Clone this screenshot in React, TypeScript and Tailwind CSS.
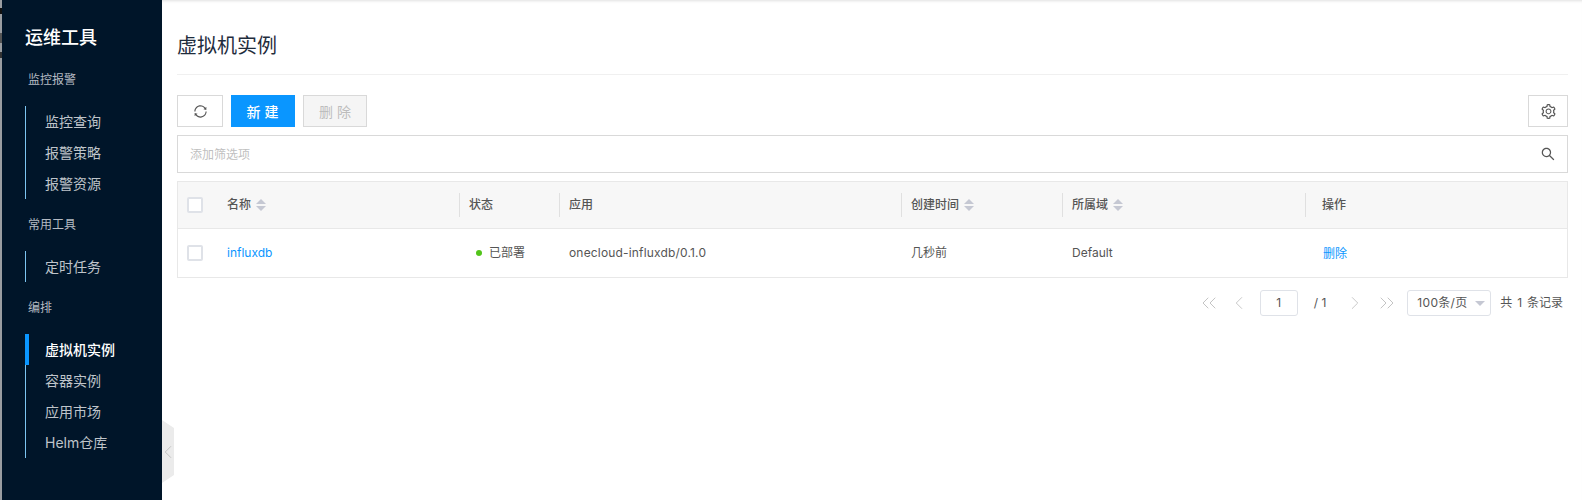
import React from 'react';
import { ChevronLeft, ChevronRight, ChevronsLeft, ChevronsRight } from 'lucide-react';
import { AiOutlineSearch, AiOutlineSetting, AiOutlineSync } from 'react-icons/ai';

const Group = ({ label, items, active }: { label: string; items: string[]; active?: string }) => (
  <div>
    <div className="h-[12px] flex items-center pl-[26px] text-[12px] leading-none text-[#b4bac2]">{label}</div>
    <ul className="mt-[20px] ml-[23px] border-l border-[#7cc4f0]">
      {items.map((item) => (
        <li
          key={item}
          className={
            item === active
              ? 'relative h-[31px] flex items-center pl-[19px] text-[14px] font-medium text-white'
              : 'h-[31px] flex items-center pl-[19px] text-[14px] text-[#bfc4ca]'
          }
        >
          {item === active && <span className="absolute left-[-1px] top-0 w-[4px] h-[31px] bg-[#0a96ff]" />}
          {item}
        </li>
      ))}
    </ul>
  </div>
);

const Sorter = () => (
  <span className="ml-[5px] flex flex-col gap-[2px]">
    <span className="w-0 h-0 border-x-[5px] border-x-transparent border-b-[5px] border-b-[#c5c8d3]" />
    <span className="w-0 h-0 border-x-[5px] border-x-transparent border-t-[5px] border-t-[#c5c8d3]" />
  </span>
);

const Checkbox = () => <span className="block w-[16px] h-[16px] border-2 border-[#dfe2e8] rounded-[2px] bg-white" />;

const gridCols = 'grid grid-cols-[49px_232px_100px_342px_161px_243px_1fr]';

const HeadCell = ({ label, sort, last }: { label: string; sort?: boolean; last?: boolean }) => (
  <div className={last ? 'flex items-center h-[24px] pl-[16px] border-l border-[#e0e0e0]' : 'flex items-center h-[24px] pl-[9px] border-l border-[#e0e0e0]'}>
    {label}
    {sort && <Sorter />}
  </div>
);

export default function App() {
  return (
    <div className="relative flex h-[500px] bg-white overflow-hidden font-['Inter','Noto_Sans_CJK_SC',sans-serif]">
      <div className="w-[2px] bg-[#9a9da1] flex flex-col">
        <div className="mt-[8px] h-[6px] bg-[#111]" />
        <div className="mt-[19px] h-[10px] bg-[#555]" />
        <div className="mt-[9px] h-[6px] bg-[#333]" />
      </div>
      <aside className="w-[160px] bg-[#001529] pt-[26px]">
        <div className="pl-[23px] h-[24px] flex items-center text-[18px] font-medium leading-none text-white">运维工具</div>
        <div className="mt-[24px] flex flex-col gap-[20px]">
          <Group label="监控报警" items={['监控查询', '报警策略', '报警资源']} />
          <Group label="常用工具" items={['定时任务']} />
          <Group label="编排" items={['虚拟机实例', '容器实例', '应用市场', 'Helm仓库']} active="虚拟机实例" />
        </div>
      </aside>
      <div className="absolute left-[162px] top-[420px] w-[12px] h-[63px] bg-[#ebebeb] flex items-center justify-center [clip-path:polygon(0_0,100%_8px,100%_55px,0_100%)]">
        <ChevronLeft size={22} strokeWidth={1} className="shrink-0 text-[#bdbdbd]" />
      </div>

      <main className="flex-1 pl-[15px] pr-[14px] text-[#555] shadow-[inset_0_3px_3px_-2px_rgba(0,0,0,0.12)]">
        <div className="h-[75px] pt-[33px] border-b border-[#f0f0f0]">
          <h1 className="text-[20px] leading-[26px] text-[#1f2d3d]">虚拟机实例</h1>
        </div>

        <div className="mt-[20px] flex items-center h-[32px]">
          <button className="w-[46px] h-[32px] border border-[#d9d9d9] flex items-center justify-center">
            <AiOutlineSync size={15} className="text-[#555]" />
          </button>
          <button className="ml-[8px] w-[64px] h-[32px] pl-[3px] bg-[#0a96ff] text-white text-[14px] font-medium tracking-[4px]">新建</button>
          <button className="ml-[8px] w-[64px] h-[32px] pl-[4px] border border-[#d9d9d9] bg-[#f5f5f5] text-[#bdbdbd] text-[14px] tracking-[4px]">删除</button>
          <button className="ml-auto w-[40px] h-[32px] border border-[#d9d9d9] flex items-center justify-center">
            <AiOutlineSetting size={17} className="text-[#555]" />
          </button>
        </div>

        <div className="mt-[8px] h-[38px] border border-[#d9d9d9] flex items-center justify-between pl-[12px] pr-[11px]">
          <span className="pt-[1px] text-[12px] text-[#bfbfbf]">添加筛选项</span>
          <AiOutlineSearch size={16} className="text-[#555]" />
        </div>

        <div className="mt-[8px] border border-[#e8e8e8] text-[12px]">
          <div className={`${gridCols} h-[47px] items-center bg-[#f7f7f7] border-b border-[#e8e8e8] font-medium`}>
            <div className="pl-[9px]"><Checkbox /></div>
            <div className="flex items-center">名称<Sorter /></div>
            <HeadCell label="状态" />
            <HeadCell label="应用" />
            <HeadCell label="创建时间" sort />
            <HeadCell label="所属域" sort />
            <HeadCell label="操作" last />
          </div>
          <div className={`${gridCols} h-[48px] items-center`}>
            <div className="pl-[9px]"><Checkbox /></div>
            <div className="text-[#0a96ff]">influxdb</div>
            <div className="pl-[17px] flex items-center">
              <span className="w-[6px] h-[6px] rounded-full bg-[#52c41a] mr-[7px]" />已部署
            </div>
            <div className="pl-[10px] tracking-[0.17px]">onecloud-influxdb/0.1.0</div>
            <div className="pl-[10px]">几秒前</div>
            <div className="pl-[10px]">Default</div>
            <div className="pl-[18px] pt-[2px] text-[#0a96ff]">删除</div>
          </div>
        </div>

        <div className="mt-[12px] h-[26px] flex items-center justify-end text-[12px]">
          <ChevronsLeft size={24} strokeWidth={1} className="text-[#c4c4c4]" />
          <ChevronLeft size={22} strokeWidth={1} className="ml-[7px] text-[#c4c4c4]" />
          <span className="ml-[10px] w-[38px] h-[26px] border border-[#dfe2e8] rounded-[3px] flex items-center justify-center">1</span>
          <span className="ml-[16px]">/ 1</span>
          <ChevronRight size={22} strokeWidth={1} className="ml-[18px] text-[#c4c4c4]" />
          <ChevronsRight size={24} strokeWidth={1} className="ml-[9px] text-[#c4c4c4]" />
          <span className="ml-[8px] w-[84px] h-[26px] border border-[#dfe2e8] rounded-[3px] flex items-center pl-[9px] tracking-[0.3px]">
            100条/页
            <span className="ml-[7px] w-0 h-0 border-x-[5px] border-x-transparent border-t-[5px] border-t-[#c5c8d3]" />
          </span>
          <span className="ml-[9px] mr-[5px] [word-spacing:1.5px]">共 1 条记录</span>
        </div>
      </main>
    </div>
  );
}
